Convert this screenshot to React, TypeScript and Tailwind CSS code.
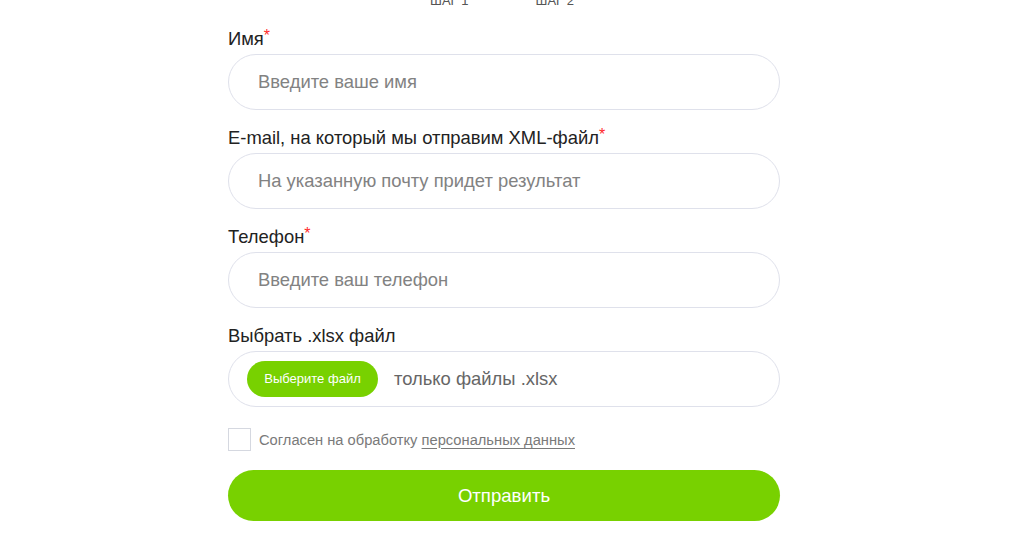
import { FC } from 'react';

const fields = [
  { label: 'Имя', placeholder: 'Введите ваше имя', type: 'text' },
  { label: 'E-mail, на который мы отправим XML-файл', placeholder: 'На указанную почту придет результат', type: 'email' },
  { label: 'Телефон', placeholder: 'Введите ваш телефон', type: 'tel' },
];

const App: FC = () => {
  return (
    <div className="min-h-screen bg-white font-['Liberation_Sans',Arial,sans-serif] overflow-hidden">
      <div className="ml-[228px] w-[552px]">
        {/* steps, scrolled mostly out of view */}
        <div className="-mt-[7px] flex justify-center gap-[67px] pr-[4px] text-[13px] leading-[16px] text-[#555]">
          <span>ШАГ 1</span>
          <span>ШАГ 2</span>
        </div>

        <form className="mt-[19px] flex flex-col">
          {fields.map((field, idx) => (
            <div key={idx} className={idx > 0 ? 'mt-[17px]' : ''}>
              <label className="block h-[22px] text-[18.4px] leading-[22px] text-[#222]">
                {field.label}
                <span className="text-[#ff2a2a] text-[16px] leading-[16px] align-top">*</span>
              </label>
              <input
                type={field.type}
                placeholder={field.placeholder}
                className="mt-[4px] block h-[56px] w-full rounded-full border border-[#dfe1eb] bg-white pl-[29px] text-[18.4px] text-[#333] placeholder:text-[#828282] outline-none"
              />
            </div>
          ))}

          <div className="mt-[17px]">
            <label className="block h-[22px] text-[18.4px] leading-[22px] text-[#222]">Выбрать .xlsx файл</label>
            <div className="mt-[4px] flex h-[56px] w-full items-center rounded-full border border-[#dfe1eb] bg-white pl-[18px]">
              <button
                type="button"
                className="flex h-[36px] w-[131px] items-center justify-center rounded-full bg-[#78d100] text-[13px] text-white"
              >
                Выберите файл
              </button>
              <span className="ml-[16px] text-[18.4px] text-[#666]">только файлы .xlsx</span>
            </div>
          </div>

          <div className="mt-[21px] flex items-center">
            <span className="block h-[23px] w-[23px] border border-[#d5d8e0] bg-white" />
            <span className="ml-[8px] text-[14.7px] leading-[22px] text-[#7a7a7a]">
              Согласен на обработку{' '}
              <a href="#" className="underline underline-offset-[3px]">
                персональных данных
              </a>
            </span>
          </div>

          <button
            type="submit"
            className="mt-[19px] h-[51px] w-full rounded-full bg-[#78d100] text-[18.6px] text-white"
          >
            Отправить
          </button>
        </form>
      </div>
    </div>
  );
};

export default App;
